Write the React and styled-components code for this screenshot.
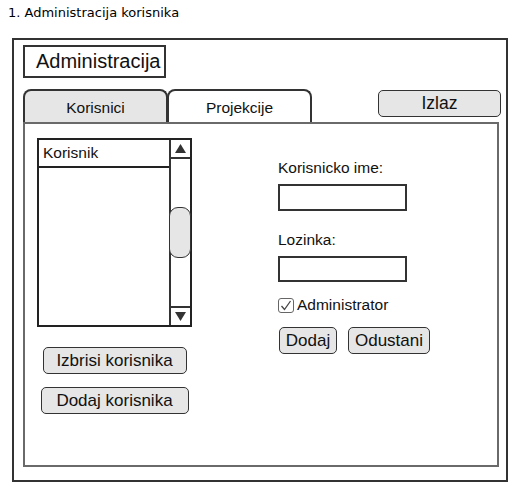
import React from 'react'
import styled, { createGlobalStyle } from 'styled-components'

const GlobalStyle = createGlobalStyle`
  body {
    margin: 0;
    background: #fff;
    font-family: 'Liberation Sans', Arial, sans-serif;
    color: #111;
  }
`

export default function App() {
  return (
    <>
      <GlobalStyle />
      <Caption>1. Administracija korisnika</Caption>
      <Frame>
        <HeaderBox>Administracija</HeaderBox>
        <TabRow>
          <Tab $active={false}>Korisnici</Tab>
          <Tab $active>Projekcije</Tab>
          <ExitButton>Izlaz</ExitButton>
        </TabRow>
        <Panel>
          <LeftColumn>
            <ListBox>
              <ListArea>
                <ListHeader>Korisnik</ListHeader>
              </ListArea>
              <ScrollBar>
                <ScrollArrow $down={false}>
                  <svg width="11" height="9" viewBox="0 0 11 9">
                    <polygon points="0,9 5.5,0 11,9" fill="#333" />
                  </svg>
                </ScrollArrow>
                <ScrollTrack>
                  <Thumb />
                </ScrollTrack>
                <ScrollArrow $down>
                  <svg width="11" height="9" viewBox="0 0 11 9">
                    <polygon points="0,0 11,0 5.5,9" fill="#333" />
                  </svg>
                </ScrollArrow>
              </ScrollBar>
            </ListBox>
            <Button $width={144} $top={20}>Izbrisi korisnika</Button>
            <Button $width={148} $top={13}>Dodaj korisnika</Button>
          </LeftColumn>

          <FormColumn>
            <FieldLabel>Korisnicko ime:</FieldLabel>
            <TextField />
            <FieldLabel $top={20}>Lozinka:</FieldLabel>
            <TextField $height={26} />
            <CheckRow>
              <CheckBox>
                <svg width="12" height="11" viewBox="0 0 12 11">
                  <polyline points="1.5,6 4.5,9.5 10.5,1" fill="none" stroke="#444" strokeWidth="1.3" />
                </svg>
              </CheckBox>
              Administrator
            </CheckRow>
            <ButtonRow>
              <Button $width={58}>Dodaj</Button>
              <Button $width={82}>Odustani</Button>
            </ButtonRow>
          </FormColumn>
        </Panel>
      </Frame>
    </>
  )
}

const Caption = styled.div`
  font-family: 'DejaVu Sans', Verdana, sans-serif;
  font-size: 13px;
  line-height: 15px;
  margin: 5px 0 0 8px;
  color: #000;
`

const Frame = styled.div`
  box-sizing: border-box;
  width: 496px;
  height: 444px;
  margin: 18px 0 0 12px;
  border: 2px solid #333;
  padding: 5px 7px 13px 9px;
  display: flex;
  flex-direction: column;
`

const HeaderBox = styled.div`
  box-sizing: border-box;
  width: 143px;
  height: 33px;
  border: 2px solid #333;
  padding-left: 11px;
  display: flex;
  align-items: center;
  font-size: 20px;
`

const TabRow = styled.div`
  display: flex;
  align-items: flex-start;
  height: 33px;
  margin-top: 11px;
`

const Tab = styled.div`
  box-sizing: border-box;
  width: 145px;
  height: 33px;
  margin-right: -1px;
  border: 2px solid #333;
  border-bottom: none;
  border-radius: 8px 8px 0 0;
  background: ${(props) => (props.$active ? '#fff' : '#e6e6e6')};
  display: flex;
  align-items: center;
  justify-content: center;
  padding-top: 2px;
  font-size: 15.5px;
`

const Button = styled.button`
  box-sizing: border-box;
  width: ${(props) => props.$width}px;
  height: 27px;
  margin-top: ${(props) => props.$top || 0}px;
  padding: 0;
  border: 1.5px solid #333;
  border-radius: 5px;
  background: #e6e6e6;
  font-family: 'Liberation Sans', Arial, sans-serif;
  font-size: 17px;
  color: #111;
`

const ExitButton = styled(Button)`
  width: 123px;
  margin: 1px -2px 0 auto;
  font-size: 17.5px;
`

const Panel = styled.div`
  box-sizing: border-box;
  flex: 1;
  border: 2px solid #6a6a6a;
  padding: 14px 0 0 12px;
  display: flex;
  gap: 86px;
`

const LeftColumn = styled.div`
  display: flex;
  flex-direction: column;
  align-items: center;
  width: 155px;
`

const ListBox = styled.div`
  box-sizing: border-box;
  width: 155px;
  height: 189px;
  border: 2px solid #222;
  display: flex;
`

const ListArea = styled.div`
  flex: 1;
`

const ListHeader = styled.div`
  height: 26px;
  border-bottom: 2px solid #222;
  padding-left: 4px;
  display: flex;
  align-items: center;
  font-size: 15.5px;
`

const ScrollBar = styled.div`
  width: 19px;
  border-left: 2px solid #333;
  display: flex;
  flex-direction: column;
`

const ScrollArrow = styled.div`
  height: 17px;
  display: flex;
  align-items: center;
  justify-content: center;
  border-bottom: ${(props) => (props.$down ? 'none' : '2px solid #333')};
  border-top: ${(props) => (props.$down ? '2px solid #333' : 'none')};
`

const ScrollTrack = styled.div`
  flex: 1;
`

const Thumb = styled.div`
  box-sizing: border-box;
  height: 51px;
  margin: 48px -1px 0 -2px;
  border: 1.5px solid #333;
  border-radius: 9px;
  background: #e6e6e6;
`

const FormColumn = styled.div`
  display: flex;
  flex-direction: column;
  padding-top: 21px;
`

const FieldLabel = styled.div`
  font-size: 15.5px;
  line-height: 18px;
  margin: ${(props) => props.$top || 0}px 0 7px 0;
`

const TextField = styled.div`
  box-sizing: border-box;
  width: 129px;
  height: ${(props) => props.$height || 27}px;
  border: 2px solid #333;
  background: #fff;
`

const CheckRow = styled.div`
  display: flex;
  align-items: center;
  gap: 3px;
  margin-top: 15px;
  height: 16px;
  font-size: 15.5px;
`

const CheckBox = styled.div`
  box-sizing: border-box;
  width: 16px;
  height: 15px;
  border: 1.5px solid #666;
  border-radius: 3px;
  display: flex;
  align-items: center;
  justify-content: center;
`

const ButtonRow = styled.div`
  display: flex;
  gap: 11px;
  margin: 14px 0 0 1px;
`
